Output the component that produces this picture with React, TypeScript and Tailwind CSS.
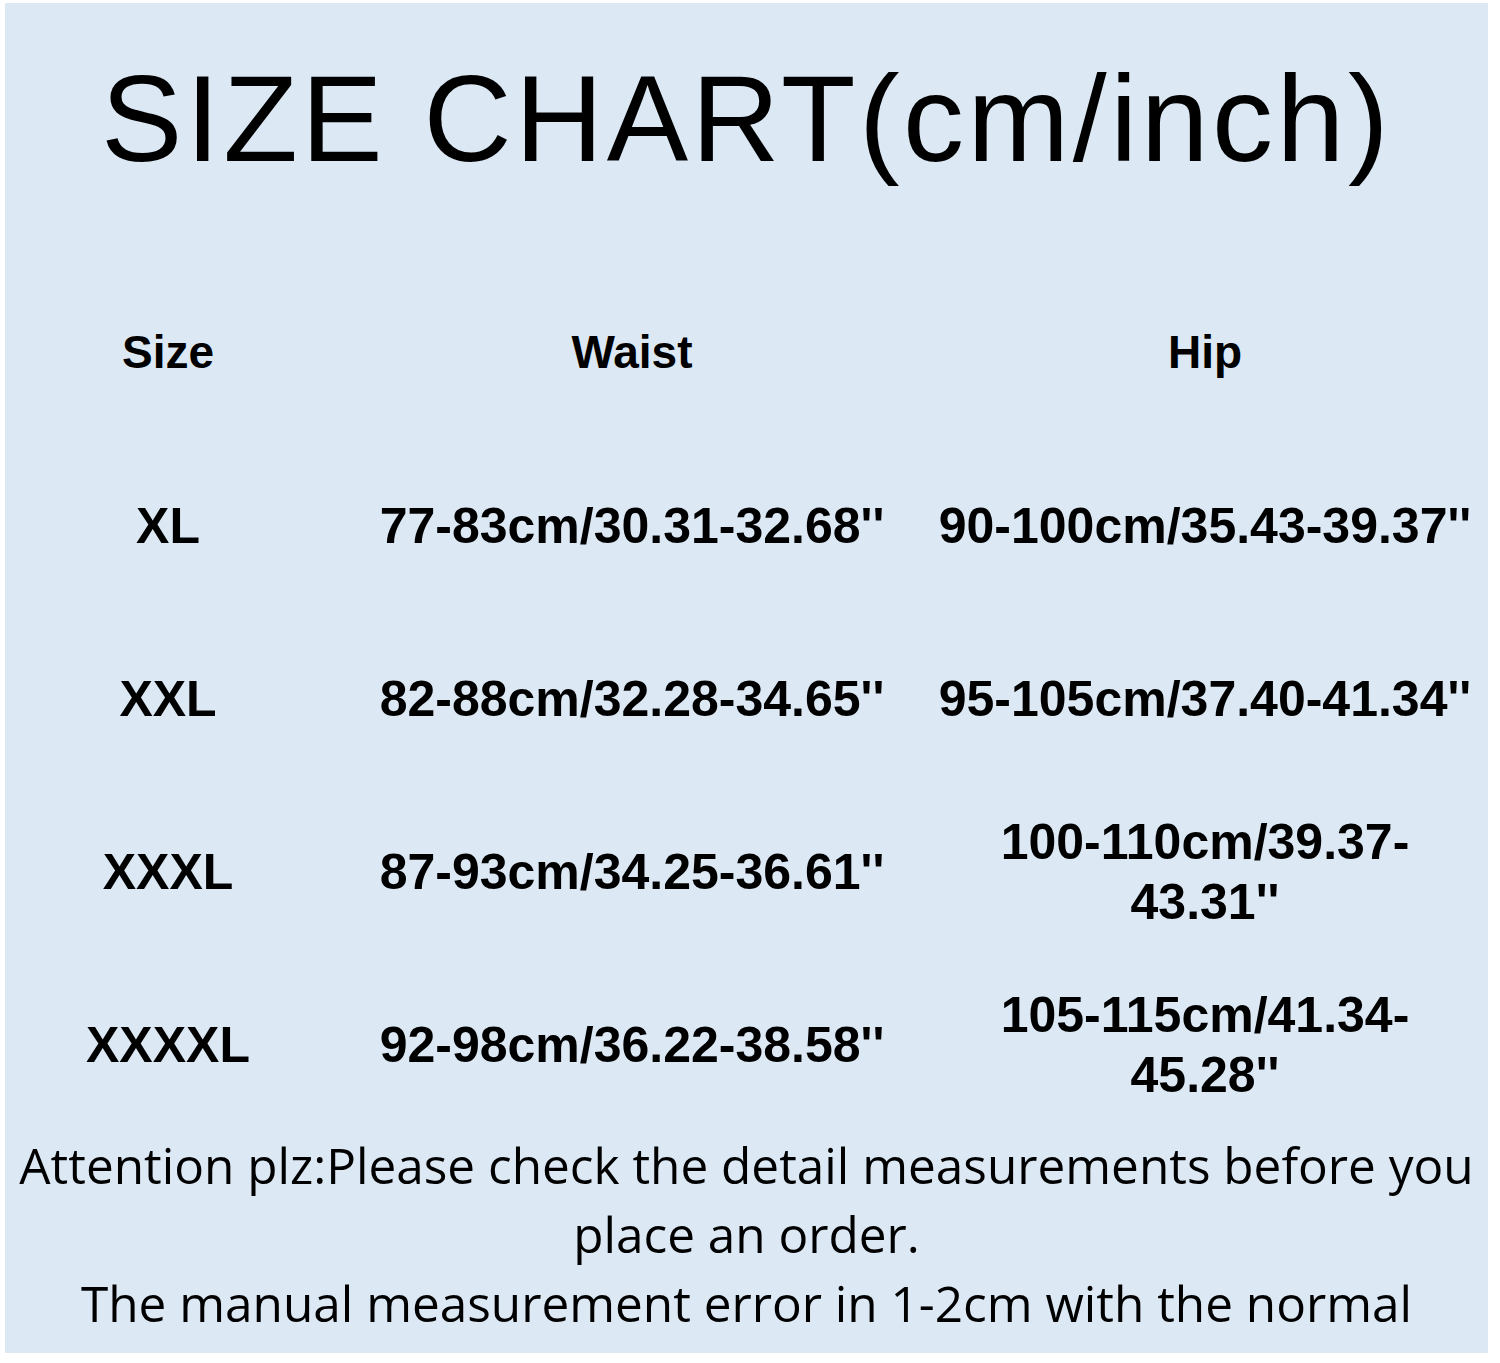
import React from "react";

const rows = [
  { size: "XL", waist: ["77-83cm/30.31-32.68''"], hip: ["90-100cm/35.43-39.37''"] },
  { size: "XXL", waist: ["82-88cm/32.28-34.65''"], hip: ["95-105cm/37.40-41.34''"] },
  { size: "XXXL", waist: ["87-93cm/34.25-36.61''"], hip: ["100-110cm/39.37-", "43.31''"] },
  { size: "XXXXL", waist: ["92-98cm/36.22-38.58''"], hip: ["105-115cm/41.34-", "45.28''"] },
];

function Cell({ lines }: { lines: string[] }) {
  return (
    <div className="flex flex-col items-center justify-center h-full leading-[60px]">
      {lines.map((l) => (
        <span key={l} className="whitespace-nowrap">{l}</span>
      ))}
    </div>
  );
}

export default function App() {
  return (
    <div className="w-[1500px] h-[1363px] bg-white pt-[3px] pl-[5px]">
      <div className="w-[1483px] h-[1350px] bg-[#dce9f5] flex flex-col text-black">
        {/* title */}
        <div className="h-[263px] flex justify-center pt-[46px]">
          <h1 className="font-['Liberation_Sans',sans-serif] text-[122px] leading-[140px] font-normal tracking-[3.5px]">
            SIZE CHART(cm/inch)
          </h1>
        </div>

        {/* table */}
        <div className="grid grid-cols-[326px_602px_544px] font-['Liberation_Sans',Arial,sans-serif] font-bold text-[50px]">
          <div className="h-[173px] flex items-center justify-center text-[46px]">Size</div>
          <div className="h-[173px] flex items-center justify-center text-[46px]">Waist</div>
          <div className="h-[173px] flex items-center justify-center text-[46px]">Hip</div>
          {rows.map((r) => (
            <React.Fragment key={r.size}>
              <div className="h-[173px]"><Cell lines={[r.size]} /></div>
              <div className="h-[173px]"><Cell lines={r.waist} /></div>
              <div className="h-[173px]"><Cell lines={r.hip} /></div>
            </React.Fragment>
          ))}
        </div>

        {/* note */}
        <div className="font-['Open_Sans',sans-serif] text-[49.5px] leading-[69px] text-center">
          <p>Attention plz:Please check the detail measurements before you</p>
          <p>place an order.</p>
          <p>The manual measurement error in 1-2cm with the normal</p>
        </div>
      </div>
    </div>
  );
}
